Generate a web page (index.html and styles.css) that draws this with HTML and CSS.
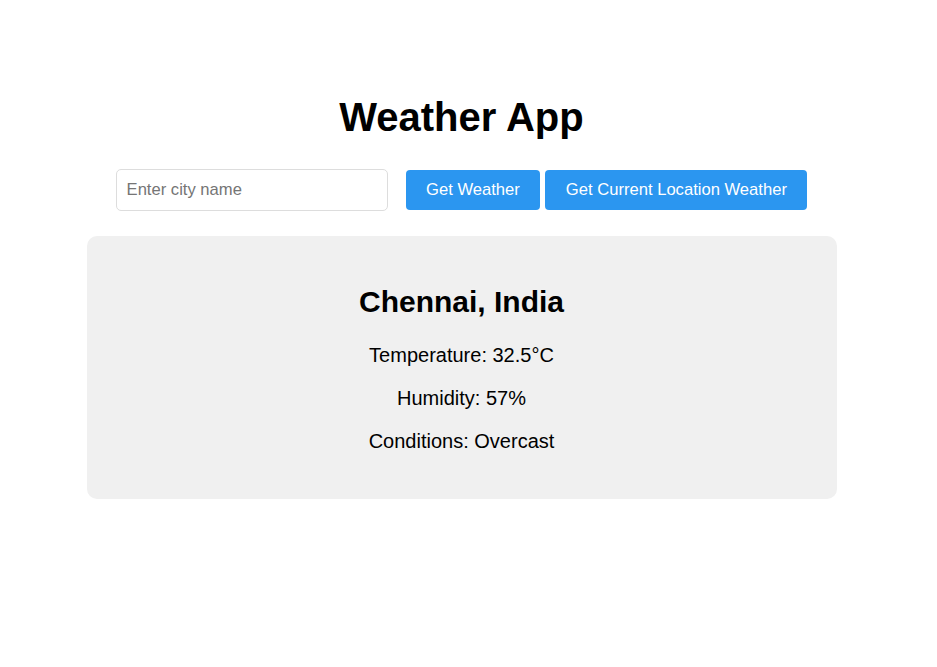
FILE: index.html
```html
<!DOCTYPE html>
<html lang="en">
<head>
<meta charset="utf-8">
<title>Weather App</title>
<link rel="stylesheet" href="styles.css">
</head>
<body>
<main class="app">
  <h1 class="title">Weather App</h1>
  <div class="controls">
    <input class="city-input" type="text" placeholder="Enter city name">
    <div class="buttons">
      <button class="btn">Get Weather</button>
      <button class="btn">Get Current Location Weather</button>
    </div>
  </div>
  <section class="card">
    <h2 class="city">Chennai, India</h2>
    <p class="info">Temperature: 32.5°C</p>
    <p class="info">Humidity: 57%</p>
    <p class="info">Conditions: Overcast</p>
  </section>
</main>
</body>
</html>
```

FILE: styles.css
```css
html, body {
  margin: 0;
  padding: 0;
  background: #ffffff;
}
body {
  font-family: "Liberation Sans", Arial, sans-serif;
  color: #000;
  padding-right: 14px;
}
.app {
  width: 750px;
  margin: 0 auto;
  padding-top: 70px;
  display: flex;
  flex-direction: column;
  align-items: center;
}
.title {
  font-size: 40px;
  font-weight: bold;
  margin: 24px 0 29px;
  line-height: 46px;
}
.controls {
  display: flex;
  align-items: center;
  gap: 18px;
}
.city-input {
  width: 272px;
  height: 42px;
  box-sizing: border-box;
  padding: 0 10px;
  font-family: "Liberation Sans", Arial, sans-serif;
  font-size: 16.6px;
  border: 1px solid #dddddd;
  border-radius: 5px;
  color: #333;
}
.city-input::placeholder {
  color: #757575;
}
.buttons {
  display: flex;
  gap: 5px;
}
.btn {
  height: 40px;
  padding: 0 20.5px;
  font-family: "Liberation Sans", Arial, sans-serif;
  font-size: 16.6px;
  color: #fff;
  background: #2b96f0;
  border: none;
  border-radius: 4px;
}
.card {
  align-self: stretch;
  margin-top: 25px;
  background: #f0f0f0;
  border-radius: 10px;
  padding: 25px 20px 26px;
  text-align: center;
}
.city {
  font-size: 30px;
  font-weight: bold;
  margin: 24px 0 25px;
}
.info {
  font-size: 20px;
  margin: 20px 0;
}
```
